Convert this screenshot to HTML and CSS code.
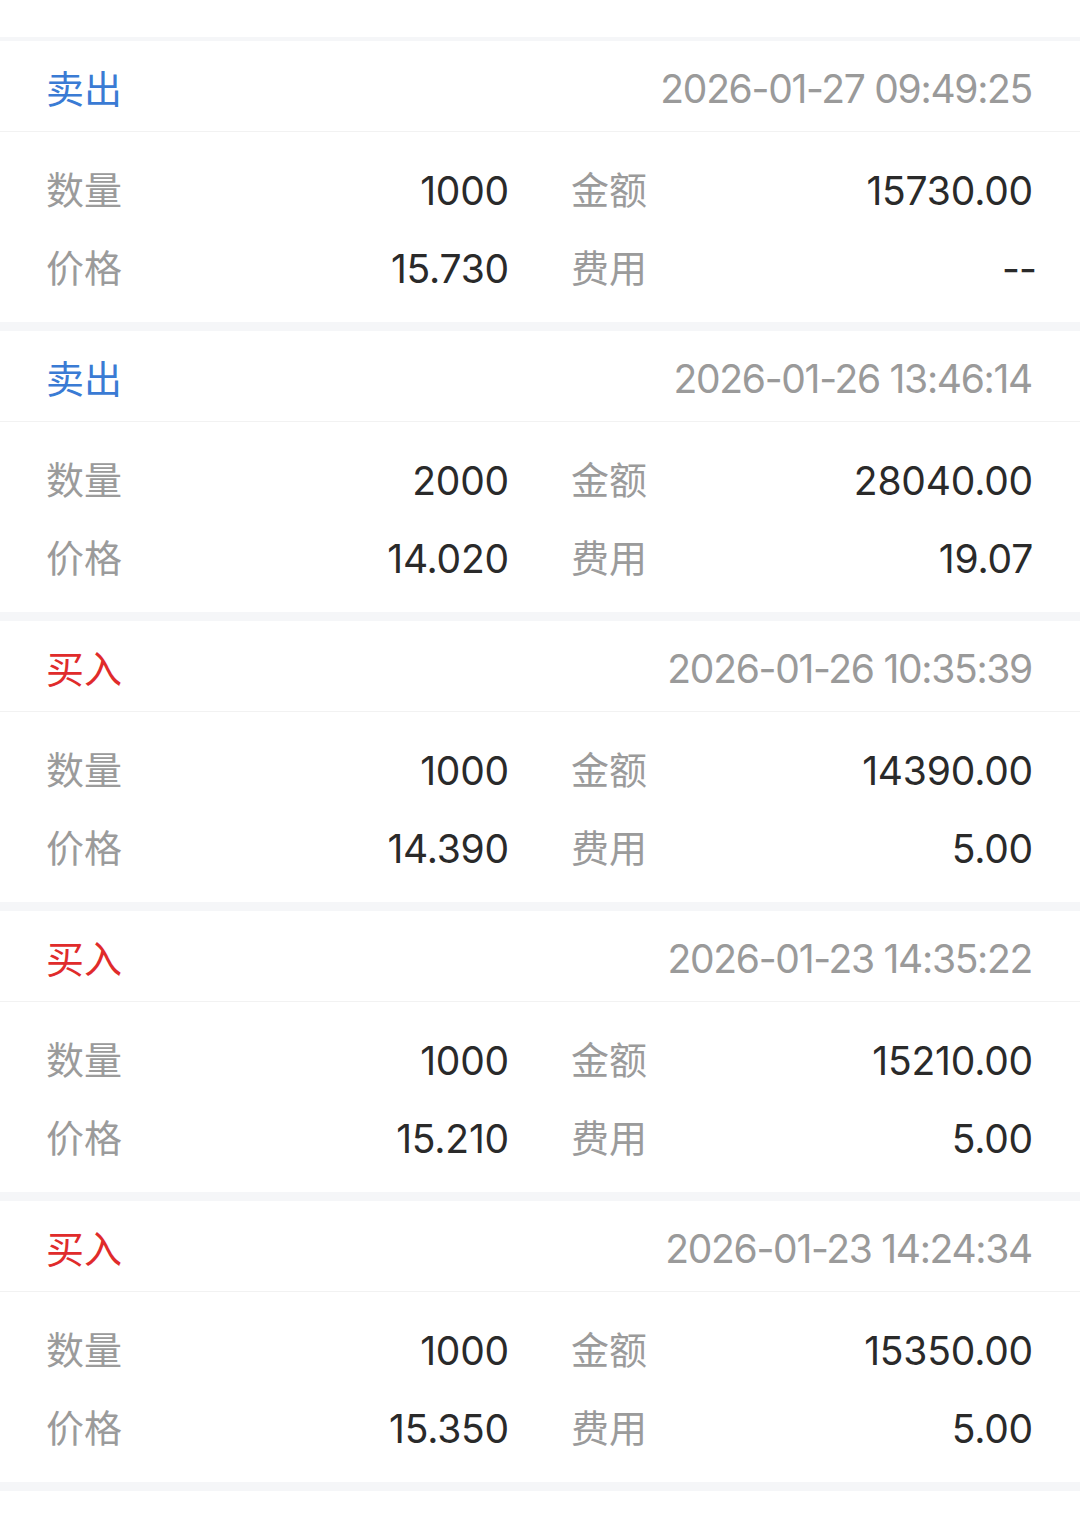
FILE: index.html
```html
<!DOCTYPE html>
<html lang="zh-CN">
<head>
<meta charset="utf-8">
<title>成交记录</title>
<link rel="stylesheet" href="styles.css">
</head>
<body>
<div class="list">
  <div class="prev"></div>
  <div class="band band-top"></div>

  <div class="card">
    <div class="head"><span class="side sell">卖出</span><span class="time">2026-01-27 09:49:25</span></div>
    <div class="body">
      <div class="row">
        <div class="pair"><span class="label">数量</span><span class="value">1000</span></div>
        <div class="pair"><span class="label">金额</span><span class="value">15730.00</span></div>
      </div>
      <div class="row">
        <div class="pair"><span class="label">价格</span><span class="value">15.730</span></div>
        <div class="pair"><span class="label">费用</span><span class="value dash">--</span></div>
      </div>
    </div>
  </div>
  <div class="band"></div>

  <div class="card">
    <div class="head"><span class="side sell">卖出</span><span class="time">2026-01-26 13:46:14</span></div>
    <div class="body">
      <div class="row">
        <div class="pair"><span class="label">数量</span><span class="value">2000</span></div>
        <div class="pair"><span class="label">金额</span><span class="value">28040.00</span></div>
      </div>
      <div class="row">
        <div class="pair"><span class="label">价格</span><span class="value">14.020</span></div>
        <div class="pair"><span class="label">费用</span><span class="value">19.07</span></div>
      </div>
    </div>
  </div>
  <div class="band"></div>

  <div class="card">
    <div class="head"><span class="side buy">买入</span><span class="time">2026-01-26 10:35:39</span></div>
    <div class="body">
      <div class="row">
        <div class="pair"><span class="label">数量</span><span class="value">1000</span></div>
        <div class="pair"><span class="label">金额</span><span class="value">14390.00</span></div>
      </div>
      <div class="row">
        <div class="pair"><span class="label">价格</span><span class="value">14.390</span></div>
        <div class="pair"><span class="label">费用</span><span class="value">5.00</span></div>
      </div>
    </div>
  </div>
  <div class="band"></div>

  <div class="card">
    <div class="head"><span class="side buy">买入</span><span class="time">2026-01-23 14:35:22</span></div>
    <div class="body">
      <div class="row">
        <div class="pair"><span class="label">数量</span><span class="value">1000</span></div>
        <div class="pair"><span class="label">金额</span><span class="value">15210.00</span></div>
      </div>
      <div class="row">
        <div class="pair"><span class="label">价格</span><span class="value">15.210</span></div>
        <div class="pair"><span class="label">费用</span><span class="value">5.00</span></div>
      </div>
    </div>
  </div>
  <div class="band"></div>

  <div class="card">
    <div class="head"><span class="side buy">买入</span><span class="time">2026-01-23 14:24:34</span></div>
    <div class="body">
      <div class="row">
        <div class="pair"><span class="label">数量</span><span class="value">1000</span></div>
        <div class="pair"><span class="label">金额</span><span class="value">15350.00</span></div>
      </div>
      <div class="row">
        <div class="pair"><span class="label">价格</span><span class="value">15.350</span></div>
        <div class="pair"><span class="label">费用</span><span class="value">5.00</span></div>
      </div>
    </div>
  </div>
  <div class="band"></div>
</div>
</body>
</html>
```
FILE: styles.css
```css
html, body {
  margin: 0;
  padding: 0;
  background: #ffffff;
}

body {
  font-family: Inter, Roboto, "Noto Sans CJK SC", sans-serif;
  width: 1080px;
  height: 1513px;
  overflow: hidden;
}

.list {
  display: flex;
  flex-direction: column;
}

.prev {
  height: 37px;
  background: #fff;
}

.band {
  height: 9px;
  background: #f5f6f8;
  flex: none;
}

.band-top {
  height: 4px;
}

.card {
  background: #fff;
}

.head {
  height: 91px;
  box-sizing: border-box;
  padding: 3px 47px 0 46px;
  display: flex;
  align-items: center;
  justify-content: space-between;
  border-bottom: 1px solid #f2f2f2;
}

.side {
  font-family: "Noto Sans CJK SC", sans-serif;
  font-size: 38px;
  line-height: 1;
  padding-bottom: 2px;
}

.sell {
  color: #3a7bd4;
}

.buy {
  color: #e02b2b;
}

.time {
  font-size: 39px;
  color: #9a9a9a;
  line-height: 1;
  padding-top: 1px;
  letter-spacing: -1.3px;
  margin-right: 1px;
  font-variant-numeric: proportional-nums;
}

.body {
  height: 190px;
  box-sizing: border-box;
  padding-top: 19px;
  display: flex;
  flex-direction: column;
}

.row {
  height: 78px;
  padding: 0 47px 0 46px;
  display: grid;
  grid-template-columns: 463px 462px;
  column-gap: 62px;
}

.pair {
  display: flex;
  align-items: center;
  justify-content: space-between;
}

.label {
  font-family: "Noto Sans CJK SC", sans-serif;
  font-size: 38px;
  color: #9b9b9b;
  line-height: 1;
  padding-bottom: 4px;
}

.value {
  font-size: 39px;
  color: #2a2a2a;
  line-height: 1;
  letter-spacing: -0.2px;
  font-variant-numeric: proportional-nums;
}

.value.dash {
  letter-spacing: -1px;
  margin-right: -3px;
}
```
